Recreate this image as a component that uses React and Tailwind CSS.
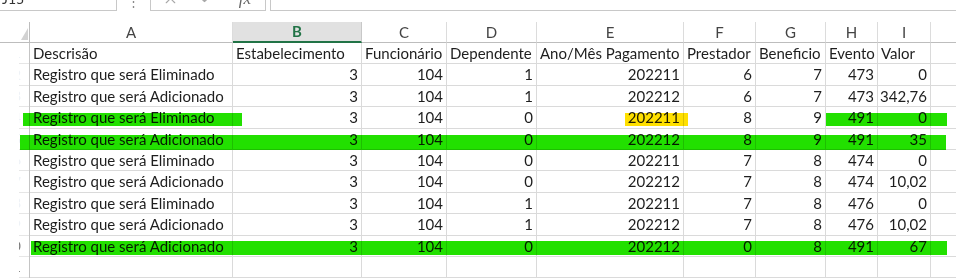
import React from "react";
import { X, Check } from "lucide-react";

const cols = [
  { key: "A", w: "w-[203px]", left: true },
  { key: "B", w: "w-[129px]" },
  { key: "C", w: "w-[85px]" },
  { key: "D", w: "w-[90px]" },
  { key: "E", w: "w-[147px]" },
  { key: "F", w: "w-[72px]" },
  { key: "G", w: "w-[70px]" },
  { key: "H", w: "w-[52px]" },
  { key: "I", w: "w-[53px]" },
];

const header = ["Descrisão", "Estabelecimento", "Funcionário", "Dependente", "Ano/Mês Pagamento", "Prestador", "Beneficio", "Evento", "Valor"];

const data = [
  ["Registro que será Eliminado", "3", "104", "1", "202211", "6", "7", "473", "0"],
  ["Registro que será Adicionado", "3", "104", "1", "202212", "6", "7", "473", "342,76"],
  ["Registro que será Eliminado", "3", "104", "0", "202211", "8", "9", "491", "0"],
  ["Registro que será Adicionado", "3", "104", "0", "202212", "8", "9", "491", "35"],
  ["Registro que será Eliminado", "3", "104", "0", "202211", "7", "8", "474", "0"],
  ["Registro que será Adicionado", "3", "104", "0", "202212", "7", "8", "474", "10,02"],
  ["Registro que será Eliminado", "3", "104", "1", "202211", "7", "8", "476", "0"],
  ["Registro que será Adicionado", "3", "104", "1", "202212", "7", "8", "476", "10,02"],
  ["Registro que será Adicionado", "3", "104", "0", "202212", "0", "8", "491", "67"],
  ["", "", "", "", "", "", "", "", ""],
];

const heights = ["h-[21px]", "h-[22px]", "h-[21px]", "h-[22px]", "h-[21px]", "h-[21px]", "h-[22px]", "h-[21px]", "h-[22px]", "h-[21px]", "h-[21px]"];

function Row({ cells, idx, height }) {
  const num = idx + 1;
  return (
    <div className={`flex ${height}`}>
      <div className="w-[30px] flex shrink-0 border-r border-[#c4c4c4]">
        <div className="w-[19px] shrink-0" />
        <div className="w-[10px] flex justify-end items-center overflow-hidden border-b border-[#e6e6e6] whitespace-nowrap">
          <span className={`pr-[8px] text-[14px] ${num >= 10 ? "text-[#7a7a7a]" : "text-[#eef2f7]"}`}>{num}</span>
        </div>
      </div>
      {cols.map((c, i) => (
        <div
          key={c.key}
          className={`${c.w} shrink-0 flex items-center border-r border-b border-[#dadada] whitespace-nowrap overflow-visible ${
            c.left || idx === 0 ? "justify-start pl-[3px]" : "justify-end pr-[3px]"
          }`}
        >
          {cells[i]}
        </div>
      ))}
      <div className="flex-1 border-b border-[#dadada]" />
    </div>
  );
}

export default function App() {
  const rows = [header, ...data];
  return (
    <div className="relative w-[956px] h-[278px] overflow-hidden bg-white font-['Lato',sans-serif] text-[15px] text-[#1e1e1e] leading-none">
      {/* formula bar */}
      <div className="h-[22px]">
        <div className="h-[11px] flex items-end overflow-hidden">
          <div className="w-[117px] h-[26px] shrink-0 border-r border-b border-[#c8c8c8] flex items-end pb-[4px] pl-[2px] text-[14px] text-[#333]">
            J15
          </div>
          <div className="w-[33px] h-[26px] shrink-0 flex items-end justify-center pb-[3px] text-[#8a8a8a] text-[13px]">⋮</div>
          <div className="w-[116px] h-[26px] shrink-0 border-l border-r border-b border-[#c8c8c8] flex items-end">
            <div className="w-[38px] flex justify-center mb-[3px]">
              <X size={17} strokeWidth={1.6} color="#a8a8a8" />
            </div>
            <div className="w-[36px] flex justify-center mb-[3px]">
              <Check size={20} strokeWidth={2.4} color="#a8a8a8" />
            </div>
            <div className="w-[40px] flex justify-center pb-[3px] font-['Liberation_Serif',serif] italic text-[17px] text-[#666]">fx</div>
          </div>
          <div className="w-[4px] shrink-0" />
          <div className="flex-1 h-[26px] border-l border-b border-[#c8c8c8]" />
        </div>
      </div>

      {/* column headers */}
      <div className="flex h-[21px] text-[#444]">
        <div className="w-[30px] shrink-0 flex border-r border-b border-[#bdbdbd]">
          <div className="w-[21px]" />
          <svg width="7" height="12" className="mt-[6px]" viewBox="0 0 7 12">
            <polygon points="7,0 7,12 0,12" fill="#d2d2d2" />
          </svg>
        </div>
        {cols.map((c) =>
          c.key === "B" ? (
            <div key={c.key} className={`${c.w} shrink-0 flex items-center justify-center bg-[#e1e1e1] border-r border-[#c8c8c8] border-b-2 border-b-[#217346] font-bold text-[#217346]`}>
              {c.key}
            </div>
          ) : (
            <div key={c.key} className={`${c.w} shrink-0 flex items-center justify-center border-r border-[#dcdcdc] border-b border-b-[#bdbdbd]`}>
              {c.key}
            </div>
          )
        )}
        <div className="flex-1 border-b border-[#bdbdbd]" />
      </div>

      {/* data rows */}
      {rows.map((r, i) => (
        <Row key={i} cells={r} idx={i} height={heights[i]} />
      ))}

      {/* highlight marks */}
      <div className="absolute left-[23px] top-[113px] w-[219px] h-[13px] bg-[#22e000] mix-blend-multiply" />
      <div className="absolute left-[625px] top-[113px] w-[63px] h-[13px] bg-[#ffe000] mix-blend-multiply" />
      <div className="absolute left-[826px] top-[113px] w-[121px] h-[13px] bg-[#22e000] mix-blend-multiply" />
      <div className="absolute left-[20px] top-[135px] w-[926px] h-[15px] bg-[#22e000] mix-blend-multiply" />
      <div className="absolute left-[31px] top-[241px] w-[916px] h-[14px] bg-[#22e000] mix-blend-multiply" />
    </div>
  );
}
